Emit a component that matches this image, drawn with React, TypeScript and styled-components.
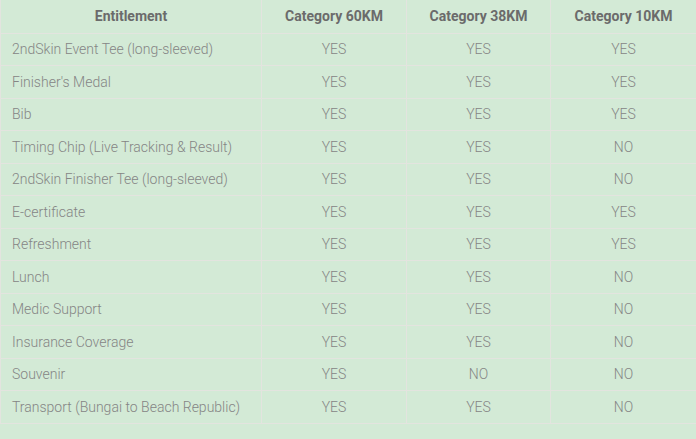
import React from 'react';
import styled, { createGlobalStyle } from 'styled-components';

const GlobalStyle = createGlobalStyle`
  html, body {
    margin: 0;
    padding: 0;
    background: #d3ead6;
  }
  body {
    font-family: Roboto, 'Liberation Sans', sans-serif;
  }
`;

const Page = styled.div`
  width: 696px;
  height: 439px;
  overflow: hidden;
  background: #d3ead6;
`;

const Table = styled.table`
  width: 696px;
  border-collapse: collapse;
  table-layout: fixed;
  font-size: 14px;
`;

const HeadCell = styled.th<{ $w: number }>`
  width: ${(p) => p.$w}px;
  height: 33px;
  box-sizing: border-box;
  padding: 0 10px;
  text-align: center;
  font-weight: 700;
  color: #6b6b6b;
  border: 1px solid #e3e4df;
  border-top: none;
`;

const Cell = styled.td<{ $first?: boolean }>`
  height: 32.5px;
  box-sizing: border-box;
  padding: 0 11px;
  text-align: ${(p) => (p.$first ? 'left' : 'center')};
  font-weight: 300;
  color: #858585;
  border: 1px solid #e3e4df;
  white-space: nowrap;
`;

const widths = [261, 145, 144, 146];
const headers = ['Entitlement', 'Category 60KM', 'Category 38KM', 'Category 10KM'];

const rows: [string, string, string, string][] = [
  ['2ndSkin Event Tee (long-sleeved)', 'YES', 'YES', 'YES'],
  ["Finisher's Medal", 'YES', 'YES', 'YES'],
  ['Bib', 'YES', 'YES', 'YES'],
  ['Timing Chip (Live Tracking & Result)', 'YES', 'YES', 'NO'],
  ['2ndSkin Finisher Tee (long-sleeved)', 'YES', 'YES', 'NO'],
  ['E-certificate', 'YES', 'YES', 'YES'],
  ['Refreshment', 'YES', 'YES', 'YES'],
  ['Lunch', 'YES', 'YES', 'NO'],
  ['Medic Support', 'YES', 'YES', 'NO'],
  ['Insurance Coverage', 'YES', 'YES', 'NO'],
  ['Souvenir', 'YES', 'NO', 'NO'],
  ['Transport (Bungai to Beach Republic)', 'YES', 'YES', 'NO'],
];

const App: React.FC = () => (
  <Page>
    <GlobalStyle />
    <Table>
      <thead>
        <tr>
          {headers.map((h, i) => (
            <HeadCell key={h} $w={widths[i]}>
              {h}
            </HeadCell>
          ))}
        </tr>
      </thead>
      <tbody>
        {rows.map((r) => (
          <tr key={r[0]}>
            {r.map((c, i) => (
              <Cell key={i} $first={i === 0}>
                {c}
              </Cell>
            ))}
          </tr>
        ))}
      </tbody>
    </Table>
  </Page>
);

export default App;
